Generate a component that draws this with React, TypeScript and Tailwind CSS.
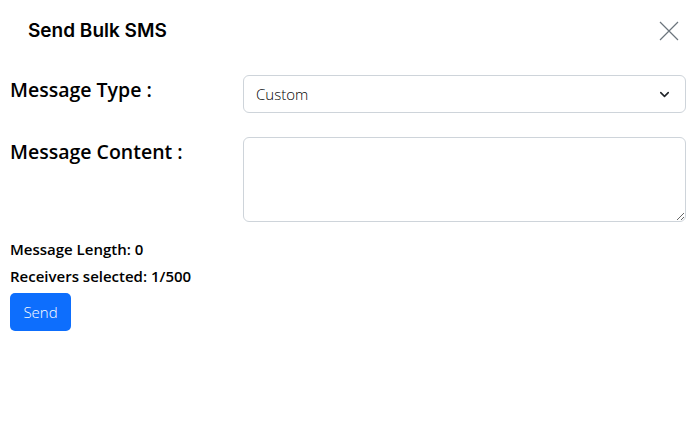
import { ChevronDown } from "lucide-react"

export default function App() {
  return (
    <div className="w-[697px] h-[422px] bg-white text-[#212529]" style={{ fontFamily: '"Open Sans", "Noto Sans", sans-serif' }}>
      {/* Header */}
      <div className="flex items-center justify-between pl-[28px] pr-[18px] h-[62px]">
        <h1 className="text-[19px] font-semibold text-black" style={{ fontFamily: 'Inter, "Liberation Sans", sans-serif' }}>
          Send Bulk SMS
        </h1>
        <button className="w-[20px] h-[20px] flex items-center justify-center text-[#6c757d]">
          <svg width="20" height="20" viewBox="0 0 20 20" fill="none" stroke="currentColor" strokeWidth="1.2">
            <path d="M1 1L19 19M19 1L1 19" />
          </svg>
        </button>
      </div>

      <div className="pl-[10px] pr-[11px]">
        {/* Message type */}
        <div className="grid grid-cols-[233px_1fr] mt-[13px]">
          <label className="text-[19.5px] font-semibold leading-[28px] pt-[1px] text-black">Message Type :</label>
          <div className="relative">
            <select className="appearance-none w-full h-[38px] border border-[#ced4da] rounded-[6px] pl-[12px] text-[15px] font-light bg-white text-black">
              <option>Custom</option>
            </select>
            <div className="pointer-events-none absolute inset-y-0 right-[14px] flex items-center">
              <ChevronDown className="w-[15px] h-[15px] text-[#212529]" strokeWidth={2.5} />
            </div>
          </div>
        </div>

        {/* Message content */}
        <div className="grid grid-cols-[233px_1fr] mt-[24px]">
          <label className="text-[19.5px] font-semibold leading-[28px] pt-[1px] text-black">Message Content :</label>
          <textarea className="w-full h-[85px] border border-[#ced4da] rounded-[6px] p-[8px] text-[14px] block" />
        </div>

        <div className="mt-[14px] text-[15px] font-semibold leading-[27px] text-black">
          <p>Message Length: 0</p>
          <p>Receivers selected: 1/500</p>
        </div>

        <button className="mt-[3px] h-[38px] w-[61px] rounded-[5px] bg-[#0d6efd] text-white text-[15px] font-light">
          Send
        </button>
      </div>
    </div>
  )
}
